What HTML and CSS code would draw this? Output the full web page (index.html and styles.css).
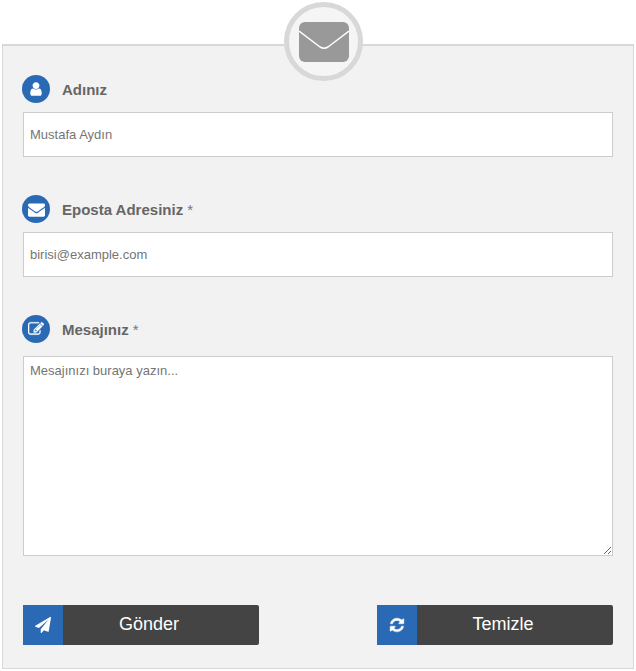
FILE: index.html
```html
<!DOCTYPE html>
<html>
	<head>
		<meta content="text/html;charset=utf-8" http-equiv="Content-Type">
		<link rel="stylesheet" href="styles.css">
	</head>
	<body>
		<div class="wrapper">
			<div class="badge">
				<svg width="50" height="40" viewBox="0 0 50 40">
					<rect width="50" height="40" rx="6" fill="#999"/>
					<path d="M0 9 L21 25 Q25 27.500 29 25 L50 9" fill="none" stroke="#fff" stroke-width="1.500"/>
				</svg>
			</div>
			<form class="panel">
				<div class="field">
					<label class="field-label">
						<span class="circle">
							<svg width="16" height="16" viewBox="0 0 1792 1792"><path fill="#fff" d="M1536 1399q0 109-62.500 187t-150.500 78h-854q-88 0-150.500-78t-62.500-187q0-85 8.500-160.500t31.500-152 58.500-131 94-89 134.500-34.500q131 128 313 128t313-128q76 0 134.500 34.500t94 89 58.500 131 31.500 152 8.500 160.500zm-256-887q0 159-112.500 271.500t-271.500 112.500-271.500-112.500-112.500-271.500 112.500-271.500 271.500-112.500 271.500 112.500 112.500 271.500z"/></svg>
						</span>
						<span>Adınız</span>
					</label>
					<input class="control" type="text" placeholder="Mustafa Aydın">
				</div>
				<div class="field">
					<label class="field-label">
						<span class="circle">
							<svg width="17" height="17" viewBox="0 0 1792 1792"><path fill="#fff" d="M1792 710v794q0 66-47 113t-113 47h-1472q-66 0-113-47t-47-113v-794q44 49 101 87 362 246 497 345 57 42 92.500 65.500t94.500 48 110 24.500h2q51 0 110-24.500t94.500-48 92.500-65.500q170-123 498-345 57-39 100-87zm0-294q0 79-49 151t-122 123q-376 261-468 325-10 7-42.500 30.500t-54 38-52 32.500-57.500 27-50 9h-2q-23 0-50-9t-57.500-27-52-32.500-54-38-42.500-30.500q-91-64-262-182.500t-205-142.500q-62-42-117-115.500t-55-136.500q0-78 41.500-130t118.500-52h1472q65 0 112.500 47t47.500 113z"/></svg>
						</span>
						<span>Eposta Adresiniz <span class="req">*</span></span>
					</label>
					<input class="control" type="text" placeholder="birisi@example.com">
				</div>
				<div class="field">
					<label class="field-label field-label-wide">
						<span class="circle">
							<svg width="16" height="16" viewBox="0 0 1792 1792"><path fill="#fff" stroke="#fff" stroke-width="30" d="M888 1184l116-116-152-152-116 116v56h96v96h56zm440-720q-16-16-33 1l-350 350q-17 17-1 33t33-1l350-350q17-17 1-33zm80 594v190q0 119-84.500 203.500t-203.500 84.500h-832q-119 0-203.500-84.500t-84.500-203.500v-832q0-119 84.500-203.500t203.500-84.500h832q63 0 117 25 15 7 18 23 3 17-9 29l-49 49q-14 14-32 8-23-6-45-6h-832q-66 0-113 47t-47 113v832q0 66 47 113t113 47h832q66 0 113-47t47-113v-126q0-13 9-22l64-64q15-15 35-7t20 29zm-96-738l288 288-672 672h-288v-288zm444 132l-92 92-288-288 92-92q28-28 68-28t68 28l152 152q28 28 28 68t-28 68z"/></svg>
						</span>
						<span>Mesajınız <span class="req">*</span></span>
					</label>
					<textarea class="control message" placeholder="Mesajınızı buraya yazın..."></textarea>
				</div>
				<div class="actions">
					<button class="btn" type="button">
						<span class="btn-icon">
							<svg width="16" height="16" viewBox="0 0 1792 1792"><path fill="#fff" d="M1764 11q33 24 27 64l-256 1536q-5 29-32 45-14 8-31 8-11 0-24-5l-453-185-242 295q-18 23-49 23-13 0-22-4-19-7-30.500-23.500t-11.500-36.500v-349l864-1059-1069 925-395-162q-37-14-40-55-2-40 32-59l1664-960q15-9 32-9 20 0 36 11z"/></svg>
						</span>
						<span class="btn-text">Gönder</span>
					</button>
					<button class="btn" type="reset">
						<span class="btn-icon">
							<svg width="16" height="16" viewBox="0 0 1792 1792"><path fill="#fff" stroke="#fff" stroke-width="50" d="M1639 1056q0 5-1 7-64 268-268 434.500t-478 166.500q-146 0-282.500-55t-243.500-157l-129 129q-19 19-45 19t-45-19-19-45v-448q0-26 19-45t45-19h448q26 0 45 19t19 45-19 45l-137 137q71 66 161 102t187 36q134 0 250-65t186-179q11-17 53-117 8-23 30-23h192q13 0 22.500 9.500t9.500 22.500zm25-800v448q0 26-19 45t-45 19h-448q-26 0-45-19t-19-45 19-45l138-138q-148-137-349-137-134 0-250 65t-186 179q-11 17-53 117-8 23-30 23h-199q-13 0-22.500-9.500t-9.500-22.500v-7q65-268 270-434.500t480-166.500q146 0 284 55.500t245 156.500l130-129q19-19 45-19t45 19 19 45z"/></svg>
						</span>
						<span class="btn-text">Temizle</span>
					</button>
				</div>
			</form>
		</div>
	</body>
</html>
```

FILE: styles.css
```css
body {
	margin: 0;
	font-family: "Liberation Sans", Arial, sans-serif;
	color: #666;
	background: #fff;
}
.wrapper {
	position: relative;
	width: 632px;
	margin-left: 2px;
	padding-top: 44px;
}
.badge {
	position: absolute;
	top: 2px;
	left: 282px;
	box-sizing: border-box;
	width: 79px;
	height: 79px;
	border: 5px solid #d8d8d8;
	border-radius: 50%;
	background: #f5f5f5;
	display: flex;
	align-items: center;
	justify-content: center;
}
.panel {
	box-sizing: border-box;
	height: 625px;
	padding: 29px 20px 0 20px;
	background: #f2f2f2;
	border: 1px solid #d8d8d8;
	border-top-width: 2px;
}
.field {
	margin-bottom: 38px;
}
.field-label {
	display: flex;
	align-items: center;
	height: 28px;
	margin-left: -1px;
	margin-bottom: 9px;
	font-size: 15px;
	font-weight: bold;
}
.field-label-wide {
	margin-bottom: 13px;
}
.req {
	font-weight: normal;
	color: #777;
}
.circle {
	width: 28px;
	height: 28px;
	margin-right: 12px;
	border-radius: 50%;
	background: #2a6ab5;
	display: flex;
	align-items: center;
	justify-content: center;
}
.control {
	display: block;
	box-sizing: border-box;
	width: 590px;
	height: 45px;
	padding: 0 6px;
	border: 1px solid #ccc;
	background: #fff;
	font-family: "Liberation Sans", Arial, sans-serif;
	font-size: 13px;
	outline: none;
}
.message {
	height: 200px;
	padding: 6px;
}
.actions {
	display: flex;
	justify-content: space-between;
	margin-top: 49px;
}
.btn {
	display: flex;
	width: 236px;
	height: 40px;
	padding: 0;
	border: 0;
	border-radius: 2px;
	background: #444;
	color: #fff;
	font-family: "Liberation Sans", Arial, sans-serif;
	font-size: 18px;
}
.btn-icon {
	width: 40px;
	height: 40px;
	background: #2a6ab5;
	display: flex;
	align-items: center;
	justify-content: center;
}
.btn-text {
	flex: 1;
	padding-right: 24px;
	line-height: 39px;
	text-align: center;
}
```
